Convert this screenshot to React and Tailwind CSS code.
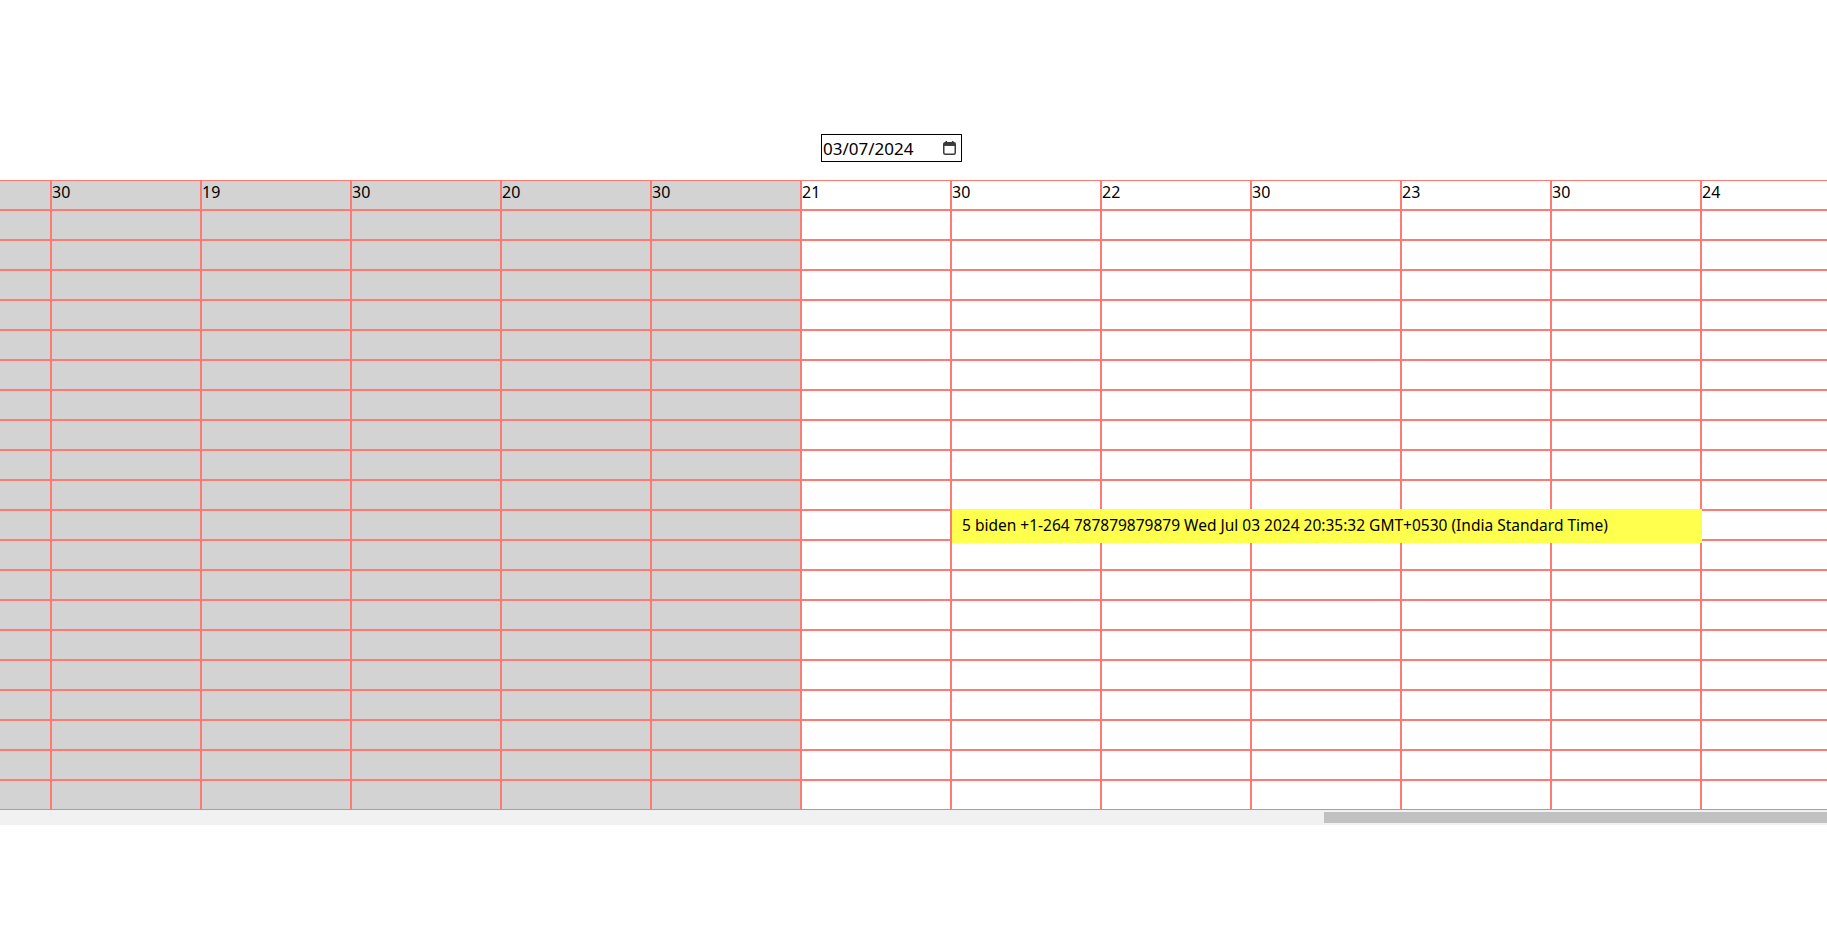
import React from "react"

const labels = ["30", "19", "30", "20", "30", "21", "30", "22", "30", "23", "30", "24"]
const PAST = 5 // full columns before "21" are greyed out
const ROWS = 20

function CalendarIcon() {
    return (
        <svg width="13" height="14" viewBox="0 0 13 14" className="shrink-0">
            <rect x="2.5" y="0" width="1.6" height="3" fill="#3b3b3b" />
            <rect x="8.9" y="0" width="1.6" height="3" fill="#3b3b3b" />
            <rect x="0.75" y="1.75" width="11.5" height="11.5" rx="1.5" fill="none" stroke="#3b3b3b" strokeWidth="1.5" />
            <rect x="0.75" y="1.75" width="11.5" height="3.2" fill="#3b3b3b" />
        </svg>
    )
}

function Row({ header }) {
    return (
        <div className="flex h-[30px]">
            {/* partial column, scrolled off to the left */}
            <div className="w-[51px] shrink-0 border border-l-0 border-[#fd7b73] bg-[#d3d3d3]" />
            {labels.map((label, i) => (
                <div
                    key={i}
                    className={`w-[150px] shrink-0 border border-[#fd7b73] leading-[normal] ${i < PAST ? "bg-[#d3d3d3]" : "bg-white"}`}
                >
                    {header ? label : ""}
                </div>
            ))}
        </div>
    )
}

export default function App() {
    return (
        <div className="min-h-screen w-full overflow-hidden bg-white text-black font-['Noto_Sans',sans-serif] text-[16px]">
            {/* Date picker */}
            <div className="pt-[134px] pl-[821px]">
                <div className="flex h-[28px] w-[141px] items-center justify-between border border-black pl-[1px] pr-[5px]">
                    <span className="text-[17px] leading-none">03/07/2024</span>
                    <CalendarIcon />
                </div>
            </div>

            {/* Timeline grid */}
            <div className="relative mt-[18px] w-[1827px] overflow-hidden">
                <Row header />
                {Array.from({ length: ROWS }).map((_, r) => (
                    <Row key={r} />
                ))}

                {/* Booking */}
                <div className="absolute left-[952px] top-[329px] flex h-[34px] w-[750px] items-center bg-[#ffff4d] pl-[10px] text-[15.5px] leading-none whitespace-nowrap">
                    5 biden +1-264 787879879879 Wed Jul 03 2024 20:35:32 GMT+0530 (India Standard Time)
                </div>
            </div>

            {/* Horizontal scrollbar */}
            <div className="flex h-[15px] w-[1827px] items-center bg-[#f1f1f1]">
                <div className="ml-[1324px] h-[11px] flex-1 bg-[#c1c1c1]" />
            </div>
        </div>
    )
}
